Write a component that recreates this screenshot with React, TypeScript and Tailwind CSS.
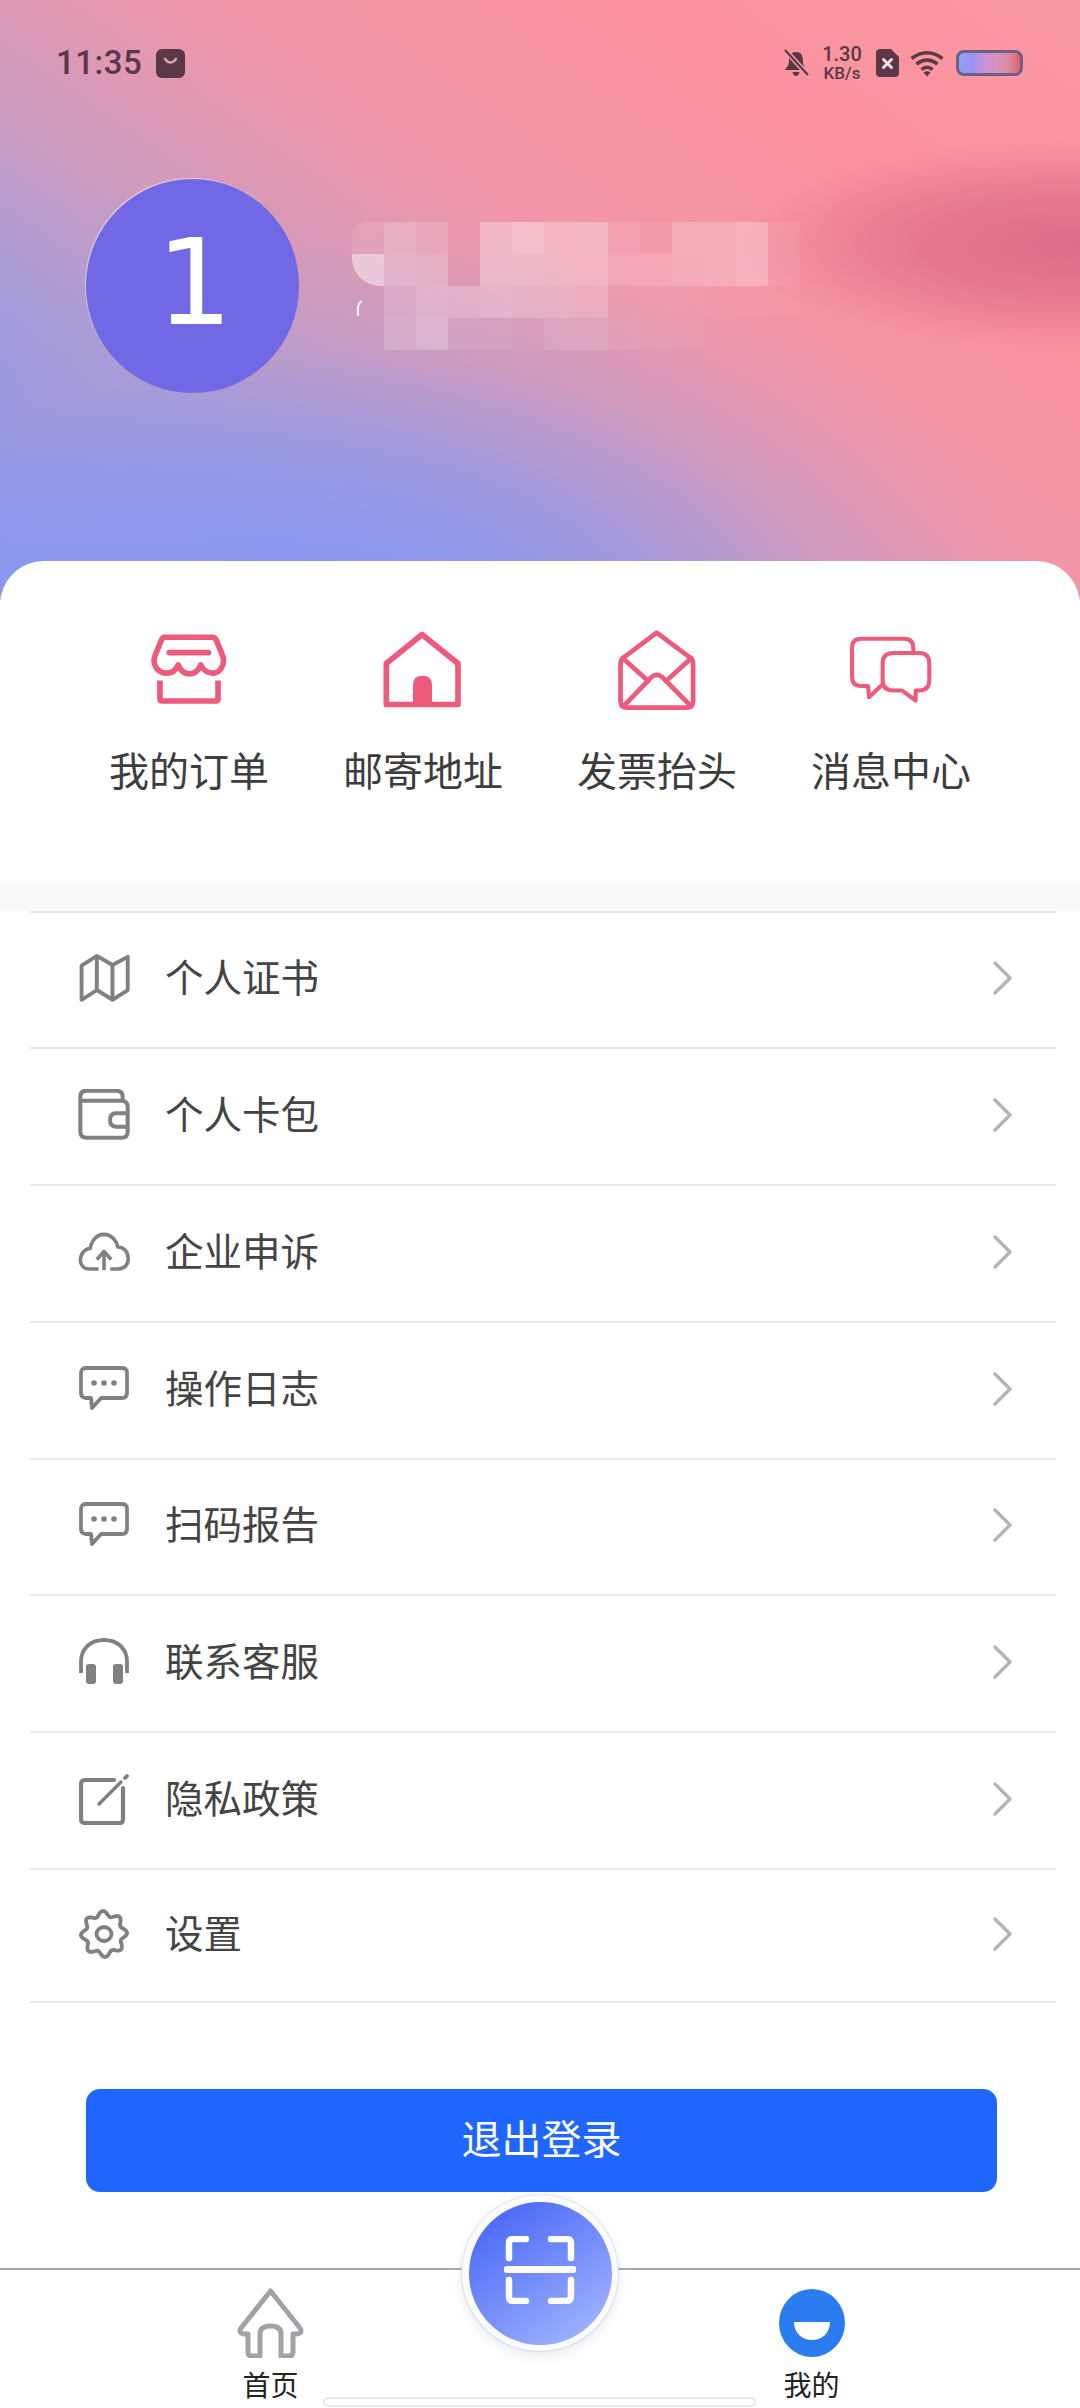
import React from "react";

const P = "#ee5a7b";
const G = "#808080";

const mosaic: number[][] = [
  [0.1, 0.22, 0.16, 0, 0.32, 0.38, 0.3, 0.32, 0.12, 0.06, 0.24, 0.24, 0.28, 0.08],
  [0.45, 0.26, 0.22, 0, 0.32, 0.32, 0.3, 0.3, 0.16, 0.16, 0.2, 0.24, 0.28, 0.08],
  [0, 0.16, 0.24, 0.22, 0.28, 0.24, 0.24, 0.2, 0.06, 0.06, 0.06, 0.04, 0.04, 0.02],
  [0, 0.18, 0.26, 0.08, 0.08, 0.04, 0.12, 0.12, 0.08, 0.06, 0.04, 0, 0, 0],
];

function gearPath() {
  const pts: string[] = [];
  for (let i = 0; i < 96; i++) {
    const t = (i / 96) * Math.PI * 2;
    const r = 20.5 + 2.6 * Math.cos(8 * t + Math.PI / 8);
    pts.push(`${(25 + r * Math.sin(t)).toFixed(2)} ${(25 - r * Math.cos(t)).toFixed(2)}`);
  }
  return "M" + pts.join("L") + "Z";
}

function StoreIcon() {
  return (
    <svg width="78" height="72" viewBox="60 40 235 215" fill="none" stroke={P} strokeWidth="17" strokeLinecap="round" strokeLinejoin="round">
      <path d="M103 52H247Q256 52 260 61L279 108C288 135 270 160 250 160C232 160 220 150 213 135C206 152 195 162 179 162C163 162 152 152 145 135C138 152 125 160 108 160C85 160 65 135 75 108L94 61Q98 52 103 52Z" />
      <path d="M118 98H236" />
      <path d="M90 182V238Q90 244 96 244H259Q265 244 265 238V182" strokeLinecap="butt" />
    </svg>
  );
}
function HouseIcon() {
  return (
    <svg width="80" height="77" viewBox="765 28 240 230" fill="none" stroke={P} strokeWidth="17" strokeLinejoin="round">
      <path d="M882 38L990 125V248H775V125Z" />
      <path d="M855 245V190Q855 162 883 162Q912 162 912 190V245Z" fill={P} stroke="none" />
    </svg>
  );
}
function MailIcon() {
  return (
    <svg width="80" height="81" viewBox="62 22 232 240" fill="none" stroke={P} strokeWidth="14" strokeLinecap="round" strokeLinejoin="round">
      <path d="M177 33L275 106Q285 113 285 125V235Q285 255 265 255H90Q70 255 70 235V125Q70 113 80 106Z" />
      <path d="M76 108L152 176M280 108L205 176" />
      <path d="M80 250L160 166Q177 150 195 166L278 250" />
    </svg>
  );
}
function ChatIcon() {
  return (
    <svg width="84" height="67" viewBox="760 45 245 197" fill="none" stroke={P} strokeWidth="12" strokeLinecap="round" strokeLinejoin="round">
      <path d="M948 92V80Q948 53 920 53H795Q768 53 768 80V165Q768 192 795 192H815L818 225L855 190" />
      <path d="M890 95H965Q995 95 995 125V175Q995 205 965 205H955L955 235L915 205H890Q858 205 858 175V125Q858 95 890 95Z" />
    </svg>
  );
}

function MapIcon() {
  return (
    <svg width="52" height="50" viewBox="232 152 160 152" fill="none" stroke={G} strokeWidth="12" strokeLinejoin="round">
      <path d="M243 190L290 160L338 188L385 163V265L338 295L290 265L243 295Z" />
      <path d="M290 160V265M338 188V295" />
    </svg>
  );
}
function WalletIcon() {
  return (
    <svg width="52" height="52" viewBox="236 562 156 156" fill="none" stroke={G} strokeWidth="12" strokeLinejoin="round">
      <path d="M243 585Q243 567 262 567H350Q370 567 370 585V597Q385 600 385 615V690Q385 708 367 708H262Q243 708 243 690Z" />
      <path d="M243 597H370" />
      <path d="M385 635H350Q332 635 332 655Q332 675 350 675H385" />
    </svg>
  );
}
function CloudIcon() {
  return (
    <svg width="58" height="44" viewBox="229 982 174 130" fill="none" stroke={G} strokeWidth="12" strokeLinejoin="round">
      <path d="M298 1104H268C240 1104 235 1080 238 1065C242 1045 258 1035 270 1035C275 1005 295 988 315 988C345 988 360 1015 362 1030C385 1030 397 1050 397 1070C397 1090 385 1104 360 1104H337" />
      <path d="M316 1108V1045M292 1072L316 1045L340 1072" />
    </svg>
  );
}
function DotsIcon() {
  return (
    <svg width="50" height="46" viewBox="0 0 50 46" fill="none" stroke={G} strokeWidth="3.8" strokeLinejoin="round">
      <path d="M7 2H43Q48 2 48 7V27Q48 32 43 32H22L13 42L12 32H7Q2 32 2 27V7Q2 2 7 2Z" />
      <circle cx="15" cy="17" r="2.8" fill={G} stroke="none" />
      <circle cx="25" cy="17" r="2.8" fill={G} stroke="none" />
      <circle cx="35" cy="17" r="2.8" fill={G} stroke="none" />
    </svg>
  );
}
function PhonesIcon() {
  return (
    <svg width="50" height="48" viewBox="0 0 50 48" fill="none" stroke={G} strokeWidth="3.8">
      <path d="M2 35V24C2 10 12 2 25 2S48 10 48 24V35" />
      <rect x="7" y="26" width="10" height="20" rx="3" fill={G} stroke="none" />
      <rect x="34" y="26" width="10" height="20" rx="3" fill={G} stroke="none" />
    </svg>
  );
}
function NoteIcon() {
  return (
    <svg width="50" height="52" viewBox="0 0 50 52" fill="none" stroke={G} strokeWidth="4.2" strokeLinecap="round" strokeLinejoin="round">
      <path d="M35 7H6Q2 7 2 11V46Q2 50 6 50H41Q44 50 44 46V15" />
      <path d="M20 31L42 9" strokeWidth="3.4" />
      <path d="M46 5L48 3" strokeWidth="3.8" />
    </svg>
  );
}
function GearIcon() {
  return (
    <svg width="50" height="50" viewBox="0 0 50 50" fill="none" stroke={G} strokeWidth="3.8" strokeLinejoin="round">
      <path d={gearPath()} />
      <ellipse cx="25" cy="25" rx="7.5" ry="7" />
    </svg>
  );
}

const rows = [
  { label: "个人证书", icon: <MapIcon />, h: "h-[136px]" },
  { label: "个人卡包", icon: <WalletIcon />, h: "h-[137px]" },
  { label: "企业申诉", icon: <CloudIcon />, h: "h-[137px]" },
  { label: "操作日志", icon: <DotsIcon />, h: "h-[137px]" },
  { label: "扫码报告", icon: <DotsIcon />, h: "h-[136px]" },
  { label: "联系客服", icon: <PhonesIcon />, h: "h-[137px]" },
  { label: "隐私政策", icon: <NoteIcon />, h: "h-[137px]" },
  { label: "设置", icon: <GearIcon />, h: "h-[133px]" },
];

const quick = [
  { label: "我的订单", icon: <StoreIcon /> },
  { label: "邮寄地址", icon: <HouseIcon /> },
  { label: "发票抬头", icon: <MailIcon /> },
  { label: "消息中心", icon: <ChatIcon /> },
];

function StatusBar() {
  const c = "#5a3848";
  return (
    <div className="flex items-center justify-between pl-[56px] pr-[57px] pt-[45px] h-[81px]">
      <div className="flex items-center gap-[14px]">
        <span className="font-['Roboto',sans-serif] font-medium text-[33px] leading-[36px] text-[#5a3848] tracking-[0.5px]">11:35</span>
        <svg width="29" height="29" viewBox="0 0 29 29">
          <rect width="29" height="29" rx="6" fill={c} />
          <path d="M9 10Q14.5 17 20 10" fill="none" stroke="#e8a0b0" strokeWidth="2.6" strokeLinecap="round" />
        </svg>
      </div>
      <div className="flex items-center">
        <svg width="27" height="28" viewBox="0 0 27 28" className="mr-[11px]">
          <path d="M13 3C7 3 6 8 6 12C6 17 3 19 2 21H23C22 19 20 17 20 12C20 8 19 3 13 3Z" fill={c} />
          <path d="M9.5 23H16.5Q15.5 27 13 27Q10.5 27 9.5 23Z" fill={c} />
          <path d="M3 2L25 26" stroke="#f898a4" strokeWidth="5" />
          <path d="M2 1L25 26" stroke={c} strokeWidth="2.2" />
        </svg>
        <div className="flex flex-col items-center w-[42px] font-['Roboto',sans-serif] text-[#5a3848] font-medium">
          <span className="text-[20px] leading-[20px]">1.30</span>
          <span className="text-[17px] leading-[17px] mt-[1px]">KB/s</span>
        </div>
        <svg width="23" height="28" viewBox="0 0 23 28" className="ml-[13px]">
          <path d="M4 0H15L23 8V24Q23 28 19 28H4Q0 28 0 24V4Q0 0 4 0Z" fill={c} />
          <path d="M7.5 10.5L15.5 18.5M15.5 10.5L7.5 18.5" stroke="#f4e0e0" strokeWidth="3" strokeLinecap="round" />
        </svg>
        <svg width="34" height="27" viewBox="0 0 34 27" className="ml-[11px]" fill="none" stroke={c} strokeWidth="3.6">
          <path d="M1.5 8.5Q17 -3 32.5 8.5" />
          <path d="M6.5 14Q17 6 27.5 14" />
          <path d="M11.5 19.5Q17 15 22.5 19.5" />
          <path d="M13.5 22.5L17 26.5L20.5 22.5Q17 20 13.5 22.5Z" fill={c} stroke="none" />
        </svg>
        <div className="ml-[12px] w-[67px] h-[26px] rounded-[8px] border-[3px] border-[#6d5f85] bg-[linear-gradient(90deg,#8ea4f4,#9a92f4,#c890d8,#d494c0,#d88ca4,#e2606e)]" />
      </div>
    </div>
  );
}

function Profile() {
  return (
    <div className="flex items-center mt-[98px] ml-[86px]">
      <div className="w-[213px] h-[214px] rounded-full bg-[#7068e4] flex items-center justify-center shadow-[-1px_-1px_0_0_rgba(255,255,255,0.45)]">
        <span className="font-['DejaVu_Sans',sans-serif] text-[120px] leading-[120px] text-white mb-[6px] ml-[4px]">1</span>
      </div>
      <div className="ml-[53px] grid grid-cols-[repeat(14,32px)] grid-rows-[repeat(4,32px)]">
        {mosaic.flatMap((row, r) =>
          row.map((a, c) => (
            <div
              key={`${r}-${c}`}
              className={
                r === 1 && c === 0
                  ? "rounded-bl-[28px]"
                  : r === 0 && c === 0
                    ? "rounded-tl-[14px]"
                    : r === 2 && c === 0
                      ? "relative"
                      : ""
              }
              style={{ backgroundColor: `rgba(255,255,255,${a})` }}
            >
              {r === 2 && c === 0 && (
                <svg width="10" height="18" viewBox="0 0 10 18" className="absolute left-[4px] top-[14px]" fill="none" stroke="#fff" strokeWidth="2" strokeLinecap="round">
                  <path d="M5 1.5Q1 4 2 15" />
                </svg>
              )}
            </div>
          ))
        )}
      </div>
    </div>
  );
}

export default function App() {
  return (
    <div className="relative flex flex-col w-[1080px] h-[2408px] overflow-hidden bg-white font-['Noto_Sans_CJK_SC','Noto_Sans',sans-serif]">
      <header className="h-[600px] shrink-0 bg-[radial-gradient(ellipse_340px_105px_at_1080px_245px,#d66484cc_0%,#d6648499_45%,#d6648400_100%),radial-gradient(ellipse_700px_400px_at_340px_640px,#7f95f8ee_0%,#8f98ecaa_45%,#b09bd055_72%,#b09bd000_100%),linear-gradient(35deg,#7f95f8_4%,#a89cd8_24%,#d09bbc_38%,#f096aa_54%,#fa929e_76%,#fb9aa4_100%)]">
        <StatusBar />
        <Profile />
      </header>

      <section className="relative -mt-[39px] h-[322px] shrink-0 rounded-t-[44px] bg-white px-[72px] pt-[68px] grid grid-cols-4">
        {quick.map((q) => (
          <div key={q.label} className="flex flex-col items-center">
            <div className="h-[80px] flex items-center justify-center">{q.icon}</div>
            <span className="mt-[38px] text-[40px] leading-[44px] text-[#3d3d3d]">{q.label}</span>
          </div>
        ))}
      </section>

      <div className="h-[28px] shrink-0 bg-[#f9f9f9]" />

      <div className="ml-[30px] mr-[24px] shrink-0 border-b-2 border-[#e8e8e8]">
        {rows.map((r) => (
          <div key={r.label} className={`flex items-center border-t-2 border-[#e8e8e8] pl-[48px] pr-[44px] pb-[4px] ${r.h}`}>
            <div className="w-[52px] flex items-center justify-center">{r.icon}</div>
            <span className="ml-[35px] mb-[6px] text-[38.5px] leading-[44px] text-[#444444]">{r.label}</span>
            <svg width="20" height="34" viewBox="0 0 20 34" className="ml-auto" fill="none" stroke="#b4b4b4" strokeWidth="3.4" strokeLinecap="round" strokeLinejoin="round">
              <path d="M3 2L18 17L3 32" />
            </svg>
          </div>
        ))}
      </div>

      <button className="mt-[86px] mx-[86px] w-[911px] h-[103px] shrink-0 rounded-[14px] bg-[#1e66ff] text-white text-[40px] leading-[44px] pb-[8px]">
        退出登录
      </button>

      <nav className="relative mt-[76px] flex-1 border-t-2 border-[#a8a8a8] flex justify-between pl-[237px] pr-[235px] pt-[18px]">
        <div className="flex flex-col items-center w-[67px]">
          <svg width="67" height="70" viewBox="0 0 67 70" fill="none" stroke="#9fa3a8" strokeWidth="5" strokeLinejoin="round">
            <path d="M33.5 3L63 40Q66 45 60 46H56V64Q56 68 52 68H44V46Q44 38 33.5 38Q23 38 23 46V68H15Q11 68 11 64V46H7Q1 45 4 40Z" />
          </svg>
          <span className="mt-[11px] text-[28px] leading-[30px] text-[#222222]">首页</span>
        </div>
        <div className="flex flex-col items-center w-[67px]">
          <svg width="66" height="70" viewBox="0 0 66 70">
            <ellipse cx="33" cy="35" rx="33" ry="34" fill="#2b7cf0" />
            <path d="M15 34H51C51 45 43 52 33 52C23 52 15 45 15 34Z" fill="#fff" />
          </svg>
          <span className="mt-[11px] text-[28px] leading-[30px] text-[#222222]">我的</span>
        </div>

        <div className="absolute left-[462px] -top-[75px] w-[156px] h-[156px] rounded-full bg-[#fbfbfd] flex items-center justify-center shadow-[0_4px_12px_rgba(120,130,180,0.2),0_0_0_1px_rgba(220,220,230,0.6)]">
          <div className="w-[143px] h-[143px] rounded-full bg-[linear-gradient(145deg,#4a68f8_10%,#7f96fa_60%,#a6b8fc_95%)] flex items-center justify-center">
            <svg width="72" height="68" viewBox="0 0 72 68" className="mb-[6px]" fill="none" stroke="#fff" strokeWidth="6.5" strokeLinecap="round" strokeLinejoin="round">
              <path d="M5 22V7Q5 3 9 3H22" />
              <path d="M47 3H62Q67 3 67 7V22" />
              <path d="M5 44V60Q5 65 9 65H22" />
              <path d="M47 65H62Q67 65 67 60V44" />
              <path d="M3 33.5H69" strokeWidth="7" />
            </svg>
          </div>
        </div>

        <div className="absolute left-[323px] top-[127px] w-[433px] h-[10px] rounded-full bg-white border-2 border-[#e8e8ec]" />
      </nav>
    </div>
  );
}
